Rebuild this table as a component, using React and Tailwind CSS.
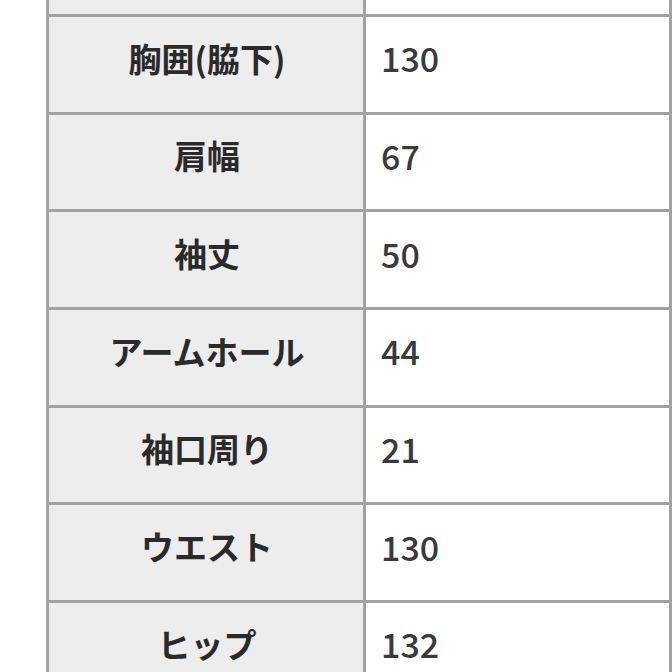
export default function App() {
  const rows = [
    ["", ""],
    ["胸囲(脇下)", "130"],
    ["肩幅", "67"],
    ["袖丈", "50"],
    ["アームホール", "44"],
    ["袖口周り", "21"],
    ["ウエスト", "130"],
    ["ヒップ", "132"],
  ];
  return (
    <div
      className="w-[672px] h-[672px] overflow-hidden bg-white"
      style={{ fontFamily: '"Noto Sans CJK JP", "Noto Sans", sans-serif' }}
    >
      <div className="ml-[46px] w-[626px] mt-[-80.67px] border-x-[3px] border-[#a2a2a2] flex flex-col">
        {rows.map(([label, value], i) => (
          <div key={i} className="flex h-[97.67px] shrink-0 border-b-[3px] border-[#a2a2a2]">
            <div className="w-[317px] shrink-0 border-r-[3px] border-[#a2a2a2] bg-[#ededed] flex items-center justify-center pb-[12px] pl-[2px] text-[33px] font-bold text-[#2a2a2a] leading-none">
              {label}
            </div>
            <div className="flex-1 bg-white flex items-center pl-[15px] pb-[12px] text-[34px] font-medium text-[#3a3a3a] leading-none">
              {value}
            </div>
          </div>
        ))}
      </div>
    </div>
  );
}
